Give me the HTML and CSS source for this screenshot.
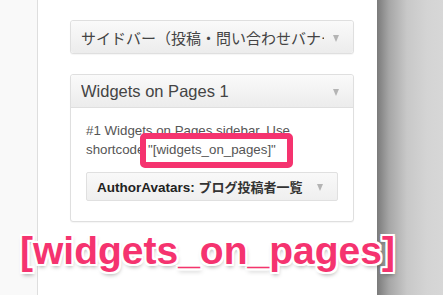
FILE: index.html
```html
<!DOCTYPE html>
<html lang="ja">

<head>
    <meta charset="UTF-8">
    <title>Widgets on Pages</title>
    <link rel="stylesheet" href="styles.css">
</head>

<body>
    <div class="screen">
        <div class="gutter"></div>

        <div class="panel">
            <div class="widget">
                <div class="widget-top">
                    <span class="widget-title jp">サイドバー（投稿・問い合わせバナー）</span>
                    <span class="arrow"></span>
                </div>
            </div>

            <div class="widget open">
                <div class="widget-top">
                    <span class="widget-title">Widgets on Pages 1</span>
                    <span class="arrow"></span>
                </div>
                <div class="widget-inside">
                    <p class="desc">#1 Widgets on Pages sidebar. Use shortcode <span class="code">"[widgets_on_pages]"</span></p>
                    <div class="inner-widget">
                        <span class="inner-title"><b>AuthorAvatars:</b> <b class="jp">ブログ投稿者一覧</b></span>
                        <span class="arrow"></span>
                    </div>
                </div>
            </div>
        </div>

        <div class="shade"></div>

        <!-- annotation over the screenshot -->
        <div class="caption">[widgets_on_pages]</div>
    </div>
</body>

</html>
```

FILE: styles.css
```css
html,
body {
    margin: 0;
    padding: 0;
}

body {
    font-family: "Liberation Sans", Arial, "Noto Sans CJK JP", sans-serif;
    color: #444;
}

.jp {
    font-family: "Liberation Sans", "Noto Sans CJK JP", sans-serif;
}

.screen {
    position: relative;
    display: flex;
    width: 443px;
    height: 295px;
    overflow: hidden;
    background-color: #f9f9f9;
}

.gutter {
    width: 37px;
    border-right: 1px solid #dedede;
    background-color: #f9f9f9;
}

.panel {
    width: 307px;
    padding: 20px 0 0 32px;
    background-color: #fff;
}

.shade {
    flex: 1;
    background: linear-gradient(to right, #7a7a7a 0, #a6a6a6 12px, #c8c8c8 30px, #d4d4d4 50px, #d7d7d7 100%);
}

.widget {
    width: 282px;
    margin-bottom: 20px;
    border: 1px solid #dfdfdf;
    border-radius: 3px;
    background-color: #fff;
    box-shadow: 0 1px 1px rgba(0, 0, 0, 0.04);
}

.widget-top {
    display: flex;
    align-items: center;
    height: 32px;
    padding: 0 10px 0 10px;
    background: linear-gradient(to bottom, #fafafa, #ececec);
    border-radius: 3px;
}

.widget.open .widget-top {
    border-bottom: 1px solid #dfdfdf;
    border-radius: 3px 3px 0 0;
}

.widget-title {
    flex: 1;
    overflow: hidden;
    white-space: nowrap;
    font-size: 16.5px;
    color: #444;
}

.widget-title.jp {
    font-size: 15px;
    margin-right: 9px;
}

.arrow {
    width: 0;
    height: 0;
    margin: 2px 4px 0 0;
    border-left: 3.5px solid transparent;
    border-right: 3.5px solid transparent;
    border-top: 7px solid #b4b4b4;
}

.widget-inside {
    padding: 13px 15px 20px 15px;
}

.desc {
    margin: 0 0 13px 0;
    font-size: 13.3px;
    line-height: 19px;
    color: #555;
}

.code {
    position: relative;
    z-index: 1;
}

.code::before {
    content: "";
    position: absolute;
    z-index: -1;
    left: -8px;
    right: -17px;
    top: -9px;
    bottom: -11px;
    border: 6px solid #f5336f;
    border-radius: 5px;
    background-color: #fff;
}

.inner-widget {
    display: flex;
    align-items: center;
    height: 27px;
    padding: 0 10px 0 10px;
    border: 1px solid #e0e0e0;
    border-radius: 2px;
    background: linear-gradient(to bottom, #f9f9f9, #efefef);
}

.inner-title {
    flex: 1;
    font-size: 13.5px;
    color: #222;
}

.inner-title .jp {
    font-size: 13px;
    color: #333;
}

.caption {
    position: absolute;
    left: 20px;
    top: 228px;
    font-family: "Liberation Sans", Arial, sans-serif;
    font-weight: bold;
    font-size: 39px;
    line-height: 46px;
    color: #f5336f;
    text-shadow:
        -2px -2px 0 #fff, 2px -2px 0 #fff, -2px 2px 0 #fff, 2px 2px 0 #fff,
        0 -2px 0 #fff, 0 2px 0 #fff, -2px 0 0 #fff, 2px 0 0 #fff,
        1px 3px 4px rgba(0, 0, 0, 0.35);
}
```
